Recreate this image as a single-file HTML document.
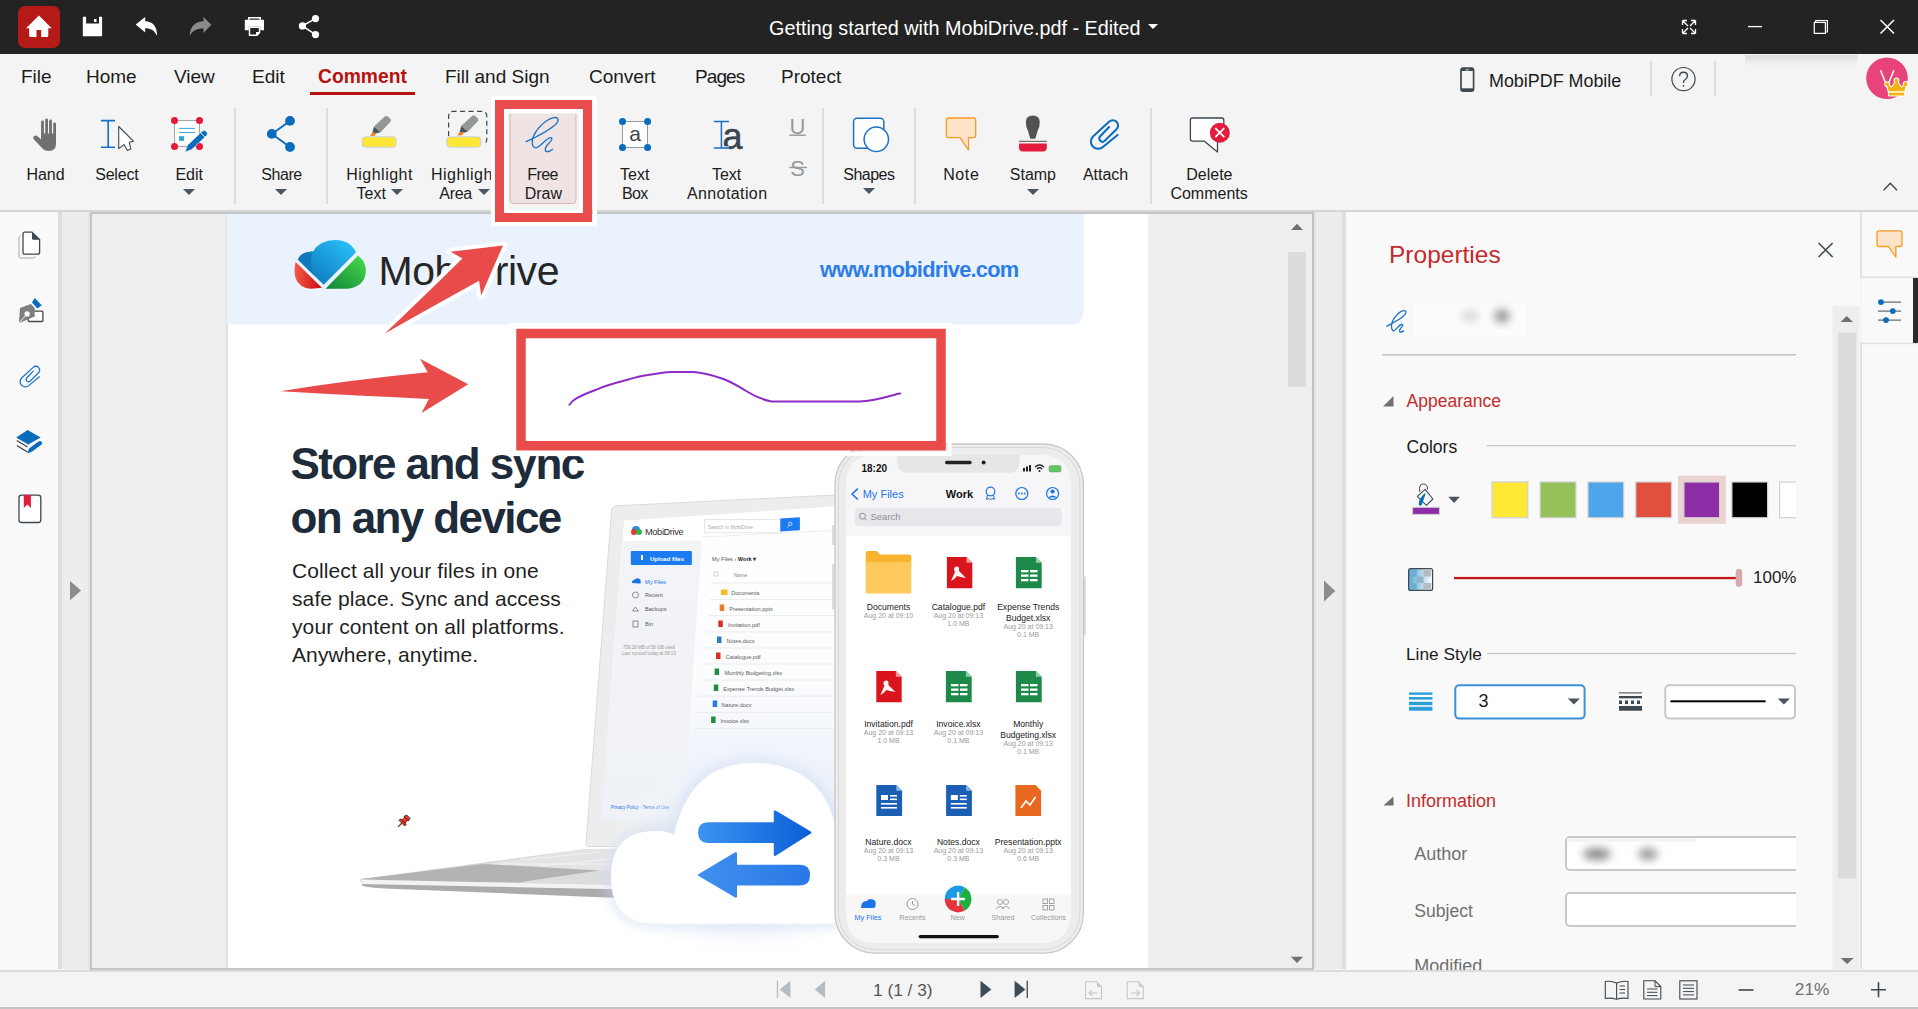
<!DOCTYPE html>
<html><head><meta charset="utf-8">
<style>
*{margin:0;padding:0;box-sizing:border-box}
html,body{width:1918px;height:1009px;overflow:hidden;background:#f4f4f4;font-family:"Liberation Sans",sans-serif;color:#1a1a1a}
.a{position:absolute}
svg{position:absolute;overflow:visible}
#title{left:0;top:0;width:1918px;height:54px;background:#232323}
#menu{left:0;top:54px;width:1918px;height:157px;background:#f4f4f4}
.mi{position:absolute;top:66px;font-size:19px;line-height:22px;color:#1b1b1b;white-space:nowrap}
.rl{position:absolute;font-size:16px;line-height:19px;color:#1b1b1b;text-align:center;white-space:nowrap}
.sep{position:absolute;top:108px;width:2px;height:96px;background:#dedede}
.tri{position:absolute;width:0;height:0;border-left:6px solid transparent;border-right:6px solid transparent;border-top:6px solid #4a5560}
</style></head><body>
<!-- TITLE BAR -->
<div id="title" class="a"></div>
<div class="a" style="left:18px;top:6px;width:42px;height:42px;border-radius:7px;background:#b51a16"></div>
<svg width="1918" height="54" style="left:0;top:0">
<path d="M38.9,15.6 L26,28.2 L29.2,28.2 L29.2,35.5 Q29.2,37 30.7,37 L36.5,37 L36.5,30 L41.2,30 L41.2,37 L46.8,37 Q48.3,37 48.3,35.5 L48.3,28.2 L51.8,28.2 Z" fill="#fff"/>
<path d="M83.5,16.7 L101.4,16.7 Q102.1,16.7 102.1,17.4 L102.1,35.5 Q102.1,36.2 101.4,36.2 L83.5,36.2 Q82.8,36.2 82.8,35.5 L82.8,17.4 Q82.8,16.7 83.5,16.7 Z M86.1,16.7 L86.1,23.4 L99,23.4 L99,16.7 Z" fill="#fff" fill-rule="evenodd"/>
<rect x="94" y="19" width="2.5" height="3" fill="#fff"/>
<path d="M135.7,24.6 L145.2,16.9 L145.2,21.3 C152,21.3 157.5,26 157,36 C154.5,30.5 151,28.3 145.2,28.3 L145.2,32.5 Z" fill="#fff"/>
<path d="M211.3,24.8 L203.5,17 L203.5,21.3 C196.5,21.5 189.5,26 189.8,36 C192.5,30.5 196.5,28.5 203.5,28.5 L203.5,33 Z" fill="#8a8a8a"/>
<path d="M248,17 L261,17 L261,19.7 L259.3,19.7 L259.3,18.4 L249.7,18.4 L249.7,19.7 L248,19.7 Z" fill="#fff"/>
<path d="M245.5,19.7 L263.3,19.7 Q264,19.7 264,20.4 L264,30.3 L260.2,30.3 L260.2,26.8 L248.8,26.8 L248.8,30.3 L244.8,30.3 L244.8,20.4 Q244.8,19.7 245.5,19.7 Z" fill="#fff"/>
<path d="M248.8,26.8 L260.2,26.8 L260.2,33 L257.2,36 L248.8,36 Z M250.2,28 L250.2,34.6 L256,34.6 L256,32 L258.8,32 L258.8,28 Z" fill="#fff" fill-rule="evenodd"/>
<g fill="#fff"><circle cx="315.5" cy="18.6" r="3.6"/><circle cx="302.4" cy="25.9" r="3.6"/><circle cx="315.5" cy="34.6" r="3.6"/></g>
<path d="M315.5,18.6 L302.4,25.9 L315.5,34.6" fill="none" stroke="#fff" stroke-width="1.6"/>
<path d="M1682.5,20.5 L1687,20.5 M1682.5,20.5 L1682.5,25 M1682.5,20.5 L1688,26 M1695.5,20.5 L1691,20.5 M1695.5,20.5 L1695.5,25 M1695.5,20.5 L1690,26 M1682.5,33.5 L1687,33.5 M1682.5,33.5 L1682.5,29 M1682.5,33.5 L1688,28 M1695.5,33.5 L1691,33.5 M1695.5,33.5 L1695.5,29 M1695.5,33.5 L1690,28" stroke="#fff" stroke-width="1.3" fill="none"/>
<path d="M1748,26.6 L1762,26.6" stroke="#fff" stroke-width="1.3"/>
<path d="M1814.3,22.3 L1825.4,22.3 L1825.4,33.4 L1814.3,33.4 Z M1815.8,22.3 L1815.8,20.5 L1827.4,20.5 L1827.4,32 L1825.4,32" stroke="#fff" stroke-width="1.2" fill="none"/>
<path d="M1880.5,20 L1894,33.5 M1894,20 L1880.5,33.5" stroke="#fff" stroke-width="1.5"/>
</svg>
<div class="a" style="left:769px;top:15px;font-size:19.8px;line-height:26px;color:#fff;white-space:nowrap">Getting started with MobiDrive.pdf - Edited</div>
<div class="tri" style="left:1148px;top:24px;border-left-width:5.5px;border-right-width:5.5px;border-top:5.5px solid #fff"></div>

<!-- MENU -->
<div id="menu" class="a"></div>
<div class="mi" style="left:21px">File</div>
<div class="mi" style="left:86px">Home</div>
<div class="mi" style="left:174px">View</div>
<div class="mi" style="left:252px">Edit</div>
<div class="mi" style="left:318px;font-weight:bold;color:#b8120f;font-size:19.3px">Comment</div>
<div class="a" style="left:310px;top:92px;width:105px;height:3px;background:#b8120f"></div>
<div class="mi" style="left:445px">Fill and Sign</div>
<div class="mi" style="left:589px">Convert</div>
<div class="mi" style="left:695px;letter-spacing:-0.9px">Pages</div>
<div class="mi" style="left:781px">Protect</div>
<svg width="1918" height="110" style="left:0;top:0">
<rect x="1461" y="68.2" width="12.6" height="23" rx="2.2" fill="none" stroke="#3d4850" stroke-width="1.7"/>
<path d="M1461.5,68.5 L1473,68.5 L1473,71 L1461.5,71 Z" fill="#3d4850"/>
<path d="M1465.5,69.8 L1469,69.8" stroke="#fff" stroke-width="0.8"/>
<path d="M1461.5,88.3 L1473,88.3 L1473,91 L1461.5,91 Z" fill="#3d4850"/>
<circle cx="1683.5" cy="79.1" r="11.6" fill="none" stroke="#3d4850" stroke-width="1.2"/>
<path d="M1679.6,76.3 Q1679.6,72.3 1683.5,72.3 Q1687.4,72.3 1687.4,76 Q1687.4,78.3 1685.2,79.5 Q1683.5,80.5 1683.5,82.5 L1683.5,83" fill="none" stroke="#3d4850" stroke-width="1.4"/><circle cx="1683.5" cy="85.8" r="0.9" fill="#3d4850"/>
<defs><linearGradient id="sh" x1="0" y1="0" x2="0" y2="1"><stop offset="0" stop-color="#dcdcdc"/><stop offset="1" stop-color="#f4f4f4"/></linearGradient></defs>
<rect x="1745" y="55" width="112.5" height="11" fill="url(#sh)"/>
<circle cx="1887" cy="78.3" r="20.8" fill="#e8437a"/>
<path d="M1880.5,70.3 L1887.2,86.8 L1893.9,70.3" fill="none" stroke="#fff" stroke-width="1.5"/>
<g stroke="#fff" stroke-width="2.2" fill="#f2b313" stroke-linejoin="round">
<path d="M1888.6,91.3 L1886.9,84.3 L1891.8,87.6 L1896.5,80.6 L1901.2,87.6 L1906,84.3 L1904.4,91.3 Z"/>
<circle cx="1887.2" cy="84.2" r="1.9"/><circle cx="1896.5" cy="80.4" r="1.9"/><circle cx="1905.7" cy="83.9" r="1.9"/>
<rect x="1889" y="92.6" width="15.2" height="2.9"/>
</g>
<g fill="#f2b313">
<path d="M1888.6,91.3 L1886.9,84.3 L1891.8,87.6 L1896.5,80.6 L1901.2,87.6 L1906,84.3 L1904.4,91.3 Z"/>
<circle cx="1887.2" cy="84.2" r="1.9"/><circle cx="1896.5" cy="80.4" r="1.9"/><circle cx="1905.7" cy="83.9" r="1.9"/>
<rect x="1889" y="92.6" width="15.2" height="2.9"/>
</g>
</svg>
<div class="mi" style="left:1489px;top:70px;font-size:17.9px">MobiPDF Mobile</div>
<div class="a" style="left:1650px;top:61px;width:2px;height:35px;background:#dcdcdc"></div>
<div class="a" style="left:1714px;top:61px;width:2px;height:35px;background:#dcdcdc"></div>

<!-- RIBBON bottom border -->
<div class="a" style="left:0;top:210px;width:1918px;height:2px;background:#d6d6d6"></div>

<svg width="1918" height="220" style="left:0;top:0">
<g fill="#6f7171">
<rect x="41.1" y="120.4" width="2.8" height="20" rx="1.4"/>
<rect x="45.2" y="118.6" width="2.8" height="20" rx="1.4"/>
<rect x="49.1" y="119.5" width="2.8" height="20" rx="1.4"/>
<rect x="53.2" y="122.4" width="2.8" height="20" rx="1.4"/>
<path d="M41.1,133.5 L56,133.5 L56,144 Q56,151 49,151 Q44.5,151 42,148 L34,139.5 Q32.3,137.5 34.3,136 Q36,135 37.8,136.5 L41.1,139.5 Z"/>
</g>
<path d="M101,120.6 L115,120.6 M108.2,120.6 L108.2,147.3 M101,147.3 L115,147.3" stroke="#1470c4" stroke-width="1.6" fill="none"/>
<path d="M118.7,126.5 L133.4,141.2 L129.3,142.3 L130.8,149 L127.3,150.4 L124,144.6 L118.7,148.6 Z" fill="#fff" stroke="#3c4850" stroke-width="1.1" stroke-linejoin="round"/>
<rect x="174.5" y="120.6" width="25" height="25.9" fill="#fff" stroke="#9a9a9a" stroke-width="0.9"/>
<g fill="#e3193b"><circle cx="174.5" cy="120.4" r="3.5"/><circle cx="199.5" cy="120.4" r="3.5"/><circle cx="174.5" cy="146.5" r="3.5"/><circle cx="199.5" cy="146.5" r="3.5"/></g>
<path d="M179.1,128.4 L194.9,128.4 M179.1,132.5 L194.9,132.5" stroke="#1ea0dc" stroke-width="0.9"/>
<rect x="179.1" y="136.2" width="4.9" height="4.6" fill="#2ba3dc"/>
<path d="M185.1,152 L187.5,145.2 L202.5,131 Q204.5,129.8 206.5,131.5 Q208.2,133.5 206.8,135.3 L191.8,149.5 Z" fill="#0a6cbd" stroke="#f4f4f4" stroke-width="0.6"/>
<path d="M200.7,132.8 L205,137.2" stroke="#f4f4f4" stroke-width="1"/>
<g fill="#0a6cbd"><circle cx="290" cy="120.9" r="4.9"/><circle cx="271.8" cy="133.9" r="4.9"/><circle cx="290" cy="147" r="4.9"/></g>
<path d="M290,120.9 L271.8,133.9 L290,147" stroke="#0a6cbd" stroke-width="1.9" fill="none"/>
<g id="hl">
<rect x="362.2" y="136.9" width="33.8" height="10.2" rx="3" fill="#fde835" stroke="#cdcdcd" stroke-width="1"/>
<path d="M385,116.3 Q386.5,115.5 388,116.5 L390.6,119.2 Q391.5,120.5 390.5,121.8 L380.5,132.3 L374,126.4 Z" fill="#949799"/>
<path d="M374,126.4 L380.5,132.3 L376.5,133.3 L372.4,132.6 Z" fill="#47535d"/>
<path d="M372.4,132.4 L376.4,133.3 L374.6,135.8 L370.1,136 Z" fill="#f27d1c"/>
</g>
<g transform="translate(84.7,0)"><rect x="362.2" y="136.9" width="33.8" height="10.2" rx="3" fill="#fde835" stroke="#cdcdcd" stroke-width="1"/></g>
<g transform="translate(87.3,-0.6)">
<path d="M385,116.3 Q386.5,115.5 388,116.5 L390.6,119.2 Q391.5,120.5 390.5,121.8 L380.5,132.3 L374,126.4 Z" fill="#949799"/>
<path d="M374,126.4 L380.5,132.3 L376.5,133.3 L372.4,132.6 Z" fill="#47535d"/>
<path d="M372.4,132.4 L376.4,133.3 L374.6,135.8 L370.1,136 Z" fill="#f27d1c"/>
</g>
<path d="M448.6,136 L448.6,116.5 Q448.6,111.3 453.8,111.3 L481.6,111.3 Q486.8,111.3 486.8,116.5 L486.8,139 Q486.8,143.5 483,144" fill="none" stroke="#3d4850" stroke-width="1.2" stroke-dasharray="5,3.5"/>
<!-- free draw button -->
<path d="M510,113.7 L510,200 Q510,203.5 513.5,203.5 L572.5,203.5 Q576,203.5 576,200 L576,113.7 Z" fill="#efe3e3"/><path d="M510,113.7 L510,200 Q510,203.5 513.5,203.5 L572.5,203.5 Q576,203.5 576,200 L576,113.7" fill="none" stroke="#d9b3b3" stroke-width="1"/>
<path d="M525.6,141.8 C533,138.5 548,131 555,125 C560,120.5 558.5,117 554,117.6 C547,118.5 537,128 533.5,136 C531,142 532,148 536,147.8 C540,147.5 545,139.5 549.5,137.8 C553,137 552.5,140 549,143 C545,147 544,151 547,151.7 C549,152 551,150.5 552.9,149" fill="none" stroke="#1a73c5" stroke-width="1.3"/>
<!-- text box -->
<rect x="622.5" y="121.5" width="25.1" height="26" fill="#fff" stroke="#7a8288" stroke-width="0.8"/>
<g fill="#0a6cbd"><circle cx="622.5" cy="121.5" r="3.5"/><circle cx="647.6" cy="121.5" r="3.5"/><circle cx="622.5" cy="147.5" r="3.5"/><circle cx="647.6" cy="147.5" r="3.5"/></g>
<text x="635.1" y="140.5" font-family="Liberation Sans" font-size="21" fill="#3a4550" text-anchor="middle">a</text>
<!-- text annotation -->
<text x="732.4" y="148.6" font-family="Liberation Sans" font-size="36" fill="#3a4550" stroke="#3a4550" stroke-width="0.5" text-anchor="middle">a</text>
<path d="M713.8,121.6 L729,121.6 M721.4,121.6 L721.4,148 M713.8,148 L729,148" stroke="#f4f4f4" stroke-width="3.5" fill="none" opacity="0.9"/>
<path d="M713.8,121.6 L729,121.6 M721.4,121.6 L721.4,148 M713.8,148 L729,148" stroke="#1470c4" stroke-width="1.5" fill="none"/>
<!-- U S -->
<text x="797.5" y="134" font-family="Liberation Sans" font-size="22" fill="#959a9e" text-anchor="middle">U</text>
<path d="M789.3,135.2 L805.8,135.2" stroke="#959a9e" stroke-width="1.5"/>
<text x="797.5" y="175.5" font-family="Liberation Sans" font-size="22" fill="#959a9e" text-anchor="middle">S</text>
<path d="M789.3,167.5 L807,167.5" stroke="#959a9e" stroke-width="1.4"/>
<!-- shapes -->
<rect x="853.6" y="118.2" width="30.2" height="30" rx="3.5" fill="#fff" stroke="#1a73c5" stroke-width="1.5"/>
<circle cx="876.3" cy="139.3" r="12.2" fill="#fff" stroke="#1a73c5" stroke-width="1.5"/>
<!-- note -->
<path d="M948.3,118 L973.7,118 Q975.7,118 975.7,120 L975.7,135.6 Q975.7,137.6 973.7,137.6 L968.5,137.6 L968.5,150 L960,137.6 L948.3,137.6 Q946.3,137.6 946.3,135.6 L946.3,120 Q946.3,118 948.3,118 Z" fill="#fde3c8" stroke="#f59a23" stroke-width="1.3" stroke-linejoin="round"/>
<!-- stamp -->
<path d="M1030.3,138.7 L1028,131 Q1025.8,126.5 1025.8,122.3 Q1025.8,115.5 1032.8,115.5 Q1039.8,115.5 1039.8,122.3 Q1039.8,126.5 1037.6,131 L1035.3,138.7 Z" fill="#525252"/>
<path d="M1019,141.3 L1046.8,141.3" stroke="#3a3a3a" stroke-width="0.9"/>
<path d="M1019,143.6 L1046.8,143.6 L1046.8,147.5 Q1046.8,151.6 1042.7,151.6 L1023.1,151.6 Q1019,151.6 1019,147.5 Z" fill="#e31b3f"/>
<!-- attach -->
<path id="clip" d="M1109.1,127 L1100,136.5 A3.2,3.2 0 0,0 1104.5,141 L1116.5,129.2 A5.3,5.3 0 0,0 1109,121.7 L1093,136.5 A7.2,7.2 0 0,0 1103.2,146.7 L1117.6,134.9" fill="none" stroke="#0a6cbd" stroke-width="2" stroke-linecap="round"/>
<!-- delete -->
<path d="M1192.4,118 L1221.8,118 Q1223.8,118 1223.8,120 L1223.8,139.1 Q1223.8,141.1 1221.8,141.1 L1217.5,141.1 L1217.5,152 L1204.1,141.1 L1192.4,141.1 Q1190.4,141.1 1190.4,139.1 L1190.4,120 Q1190.4,118 1192.4,118 Z" fill="#fff" stroke="#3a4550" stroke-width="1.3" stroke-linejoin="round"/>
<circle cx="1219.8" cy="132.7" r="10" fill="#e31b3f"/>
<path d="M1215.3,128.2 L1224.3,137.2 M1224.3,128.2 L1215.3,137.2" stroke="#fff" stroke-width="1.8"/>
<!-- collapse chevron -->
<path d="M1883.6,190.2 L1890.3,183.3 L1897,190.2" fill="none" stroke="#3d4850" stroke-width="1.4"/>
</svg>
<!-- RIBBON -->
<div class="sep" style="left:234px"></div>
<div class="sep" style="left:326px"></div>
<div class="sep" style="left:822px"></div>
<div class="sep" style="left:914px"></div>
<div class="sep" style="left:1150px"></div>
<div class="rl" style="left:-54.5px;top:165px;width:200px;">Hand</div>
<div class="rl" style="left:16.799999999999997px;top:165px;width:200px;letter-spacing:-0.2px">Select</div>
<div class="rl" style="left:89.19999999999999px;top:165px;width:200px;">Edit</div>
<div class="rl" style="left:181.5px;top:165px;width:200px;letter-spacing:-0.4px">Share</div>
<div class="rl" style="left:279.6px;top:165px;width:200px;letter-spacing:0.5px">Highlight</div>
<div class="rl" style="left:356.5px;top:184px">Text</div>
<div class="rl" style="left:431px;top:165px;letter-spacing:0.5px">Highlight</div>
<div class="rl" style="left:439.3px;top:184px;letter-spacing:-0.3px">Area</div>
<div class="rl" style="left:442.6px;top:165px;width:200px;letter-spacing:-0.6px">Free</div>
<div class="rl" style="left:443.4px;top:184px;width:200px;">Draw</div>
<div class="rl" style="left:534.7px;top:165px;width:200px;">Text</div>
<div class="rl" style="left:534.9px;top:184px;width:200px;letter-spacing:-0.6px">Box</div>
<div class="rl" style="left:626.6px;top:165px;width:200px;">Text</div>
<div class="rl" style="left:627.2px;top:184px;width:200px;letter-spacing:0.4px">Annotation</div>
<div class="rl" style="left:768.9px;top:165px;width:200px;letter-spacing:-0.5px">Shapes</div>
<div class="rl" style="left:861.3px;top:165px;width:200px;letter-spacing:0.6px">Note</div>
<div class="rl" style="left:932.9000000000001px;top:165px;width:200px;">Stamp</div>
<div class="rl" style="left:1005.5999999999999px;top:165px;width:200px;">Attach</div>
<div class="rl" style="left:1109.4px;top:165px;width:200px;">Delete</div>
<div class="rl" style="left:1109.1px;top:184px;width:200px;">Comments</div>
<div class="tri" style="left:183px;top:189px"></div>
<div class="tri" style="left:275px;top:189px"></div>
<div class="tri" style="left:391.2px;top:189px"></div>
<div class="tri" style="left:478px;top:189px"></div>
<div class="tri" style="left:863px;top:188px"></div>
<div class="tri" style="left:1027px;top:189px"></div>
<!-- MAIN -->
<div class="a" style="left:0;top:212px;width:58px;height:757px;background:#f9f9f9"></div>
<div class="a" style="left:58px;top:212px;width:4px;height:757px;background:#dedede"></div>
<div class="a" style="left:62px;top:212px;width:26px;height:757px;background:#ededf0"></div>
<div class="a" style="left:88px;top:212px;width:2px;height:757px;background:#e4e4e4"></div>
<div class="a" style="left:90px;top:212px;width:1224px;height:758px;background:#eeeeee;border:2px solid #c4c4c4"></div>
<div class="a" style="left:226px;top:214px;width:1.6px;height:754px;background:#e2e2e2"></div>
<div class="a" style="left:227.5px;top:214px;width:920.5px;height:754px;background:#fff"></div>

<div class="a" style="left:1314px;top:212px;width:1.8px;height:757px;background:#e4e4e4"></div><div class="a" style="left:1315.8px;top:212px;width:26.2px;height:757px;background:#ededf0"></div>
<div class="a" style="left:1342px;top:212px;width:4px;height:757px;background:#dedede"></div>
<div class="a" style="left:1346px;top:212px;width:514px;height:757px;background:#f9f9f9"></div>
<div class="a" style="left:1860px;top:212px;width:2px;height:65px;background:#e1e1e1"></div><div class="a" style="left:1860px;top:343px;width:2px;height:626px;background:#e1e1e1"></div>
<div class="a" style="left:1862px;top:212px;width:56px;height:757px;background:#f9f9f9"></div>

<!-- PAGE CONTENT -->
<svg width="1918" height="1009" style="left:0;top:0">
<defs>
<clipPath id="pg"><rect x="227" y="214" width="921" height="755"/></clipPath>
<linearGradient id="gb" x1="1" y1="0" x2="0" y2="1"><stop offset="0" stop-color="#2ac5fc"/><stop offset="1" stop-color="#0a6db3"/></linearGradient>
<linearGradient id="gr" x1="0" y1="0" x2="1" y2="0"><stop offset="0" stop-color="#f65a48"/><stop offset="1" stop-color="#c70b0b"/></linearGradient>
<linearGradient id="gg" x1="0" y1="1" x2="1" y2="0"><stop offset="0" stop-color="#0f8438"/><stop offset="1" stop-color="#48dc4c"/></linearGradient>
<linearGradient id="ga" x1="0" y1="0" x2="1" y2="0"><stop offset="0" stop-color="#3d92f2"/><stop offset="1" stop-color="#0c5fd6"/></linearGradient>
<linearGradient id="ga2" x1="0" y1="0" x2="1" y2="0"><stop offset="0" stop-color="#3f90f0"/><stop offset="1" stop-color="#2a78e6"/></linearGradient>
<radialGradient id="glow" cx="0.5" cy="0.55" r="0.5"><stop offset="0.6" stop-color="#dfe9f8"/><stop offset="1" stop-color="#ffffff" stop-opacity="0"/></radialGradient>
<linearGradient id="scr" x1="0" y1="0" x2="0" y2="1"><stop offset="0" stop-color="#ffffff"/><stop offset="1" stop-color="#eef2f8"/></linearGradient>
</defs>
<g clip-path="url(#pg)">
<path d="M227,214 L1083.6,214 L1083.6,311 Q1083.6,324.6 1070,324.6 L227,324.6 Z" fill="#eaf2fd"/>
<!-- logo -->
<path d="M297.8,259.5 Q300,253 310,251.8 L313,251.6 Q320,240 335,240 Q350,240 356,252.3 L323.7,284.8 Z" fill="url(#gb)"/>
<path d="M297.8,259.5 Q300,253 310,251.8 L313,251.6 Q310.5,258 311,265 Q311.5,272 316,277.5 Z" fill="#0e76b6" opacity="0.8"/>
<path d="M295.7,262 L321.9,287.8 L311,288.8 Q299,288 295.5,278 Q293.5,270 295.7,262 Z" fill="url(#gr)"/>
<path d="M357.9,255.7 Q366.3,261 365.8,272 Q364.5,287 347,288.8 L325.5,288.8 Z" fill="url(#gg)"/>
<!-- laptop -->
<defs><linearGradient id="lc" x1="0" y1="0" x2="0" y2="1"><stop offset="0" stop-color="#ffffff"/><stop offset="0.55" stop-color="#fbfcfe"/><stop offset="1" stop-color="#e6edf8"/></linearGradient>
<linearGradient id="sb" x1="0" y1="0" x2="0" y2="1"><stop offset="0" stop-color="#f3f4f7"/><stop offset="1" stop-color="#eef1f6"/></linearGradient></defs>
<path d="M617,505.8 Q612,506 611.5,511 L586,844 Q586,846.5 589,846.5 L835,846.5 L835,495 Z" fill="#ededed" stroke="#dadada" stroke-width="1"/>
<path d="M624.2,520.8 L835,506.6 L835,820.5 L600.5,820.5 Z" fill="url(#lc)"/>
<path d="M624.2,520.8 L835,506.6 L835,530.5 L623.4,541 Z" fill="#ffffff"/><path d="M701.8,537 L835,530.5" stroke="#e8e8e8" stroke-width="0.8"/>
<path d="M623.4,541 L701.8,540.5 L683,820.5 L600.5,820.5 Z" fill="url(#sb)"/>
<rect x="630.8" y="551" width="61.1" height="14" rx="1" fill="#1a7cf0"/>
<rect x="704.4" y="519.5" width="76.3" height="13.3" fill="#fff" stroke="#e0e0e0" stroke-width="0.8"/>
<path d="M780.3,518.6 L799.9,517.3 L799.9,530.2 L780.3,531.5 Z" fill="#1a7cf0"/><path d="M789,525.5 L787.5,527.5" stroke="#fff" stroke-width="0.7"/><circle cx="790.3" cy="523.8" r="1.7" fill="none" stroke="#fff" stroke-width="0.7"/>
<circle cx="636" cy="530" r="4" fill="#1f8ee0"/><circle cx="634" cy="532" r="3" fill="#e23b2e"/><circle cx="639" cy="532" r="3" fill="#2eb84d"/>
<text x="645" y="534.5" font-family="Liberation Sans" font-size="9.3" fill="#333" letter-spacing="-0.4">MobiDrive</text>
<g font-family="Liberation Sans" font-size="5.6" fill="#5a5a5a">
<path d="M632,583 Q632,579.5 635,579.5 Q636.5,577.5 638.5,578.5 Q641,579 640.5,581.5 Q641.5,583.5 639.5,583.5 Z" fill="#1a73e8"/>
<text x="645" y="584" fill="#1a73e8">My Files</text>
<circle cx="635.5" cy="595" r="3" fill="none" stroke="#666" stroke-width="0.7"/><text x="645" y="597">Recent</text>
<path d="M632.5,611 L635.5,607 L638.5,611 Z" fill="none" stroke="#666" stroke-width="0.7"/><text x="645" y="611">Backups</text>
<rect x="633" y="621" width="5" height="6" fill="none" stroke="#666" stroke-width="0.7"/><text x="645" y="626">Bin</text>
<text x="623" y="649" font-size="4.5" fill="#999">759.28 MB of 50 GB used</text>
<text x="622" y="655" font-size="4.5" fill="#999">Last synced today at 09:13</text>
<text x="610.7" y="809" font-size="4.5" fill="#1a73e8">Privacy Policy · Terms of Use</text>
<text x="712" y="561" fill="#555">My Files  ›  <tspan font-weight="bold" fill="#222">Work ▾</tspan></text>
<rect x="714" y="572" width="4" height="4" fill="none" stroke="#bbb" stroke-width="0.6"/><text x="734" y="577" fill="#888" font-size="5">Name</text>
<text x="731.2" y="595">Documents</text>
<text x="729.3" y="611">Presentation.pptx</text>
<text x="728" y="627">Invitation.pdf</text>
<text x="726.6" y="643">Notes.docx</text>
<text x="725.8" y="659">Catalogue.pdf</text>
<text x="724.5" y="675">Monthly Budgeting.xlsx</text>
<text x="723.2" y="691">Expense Trends Budget.xlsx</text>
<text x="721.3" y="707">Nature.docx</text>
<text x="720.5" y="723">Invoice.xlsx</text>
</g>
<text x="708" y="529" font-family="Liberation Sans" font-size="5" fill="#aaa">Search in MobiDrive</text>
<g fill="#fff"><rect x="641" y="555" width="2" height="5"/><text x="650" y="561" font-family="Liberation Sans" font-size="6" font-weight="bold">Upload files</text></g>
<g stroke="#e6e8eb" stroke-width="0.8"><path d="M712,583 L835,583 M710,599.5 L835,599.5 M708,615.6 L835,615.6 M706,631.8 L835,631.8 M704,648 L835,648 M702,664 L835,664 M700,680 L835,680 M698,696.2 L835,696.2 M696,712.4 L835,712.4 M694,728.5 L835,728.5"/></g>
<g><rect x="721" y="589.5" width="6.5" height="5.5" fill="#f7b82a"/><rect x="719.7" y="604.5" width="4.5" height="6.5" fill="#ee7b25"/><rect x="718.3" y="620.5" width="4.5" height="6.5" fill="#d93025"/><rect x="717" y="636.5" width="4.5" height="6.5" fill="#2a7bd6"/><rect x="716" y="652.5" width="4.5" height="6.5" fill="#d93025"/><rect x="714.6" y="668.5" width="4.5" height="6.5" fill="#1e8e3e"/><rect x="713.8" y="684.5" width="4.5" height="6.5" fill="#1e8e3e"/><rect x="712.7" y="700.5" width="4.5" height="6.5" fill="#2a7bd6"/><rect x="711.1" y="716.5" width="4.5" height="6.5" fill="#1e8e3e"/></g>
<!-- laptop base -->
<path d="M360.8,878.9 L585.7,849 L700,848.5 L700,886 L360.8,882 Z" fill="#d6d6d6"/>
<path d="M483.5,864 L585.7,849 L700,848.5 L700,872 L590,871 Z" fill="#e4e4e4"/>
<path d="M520,860 L600,852 M540,866 L620,858 M500,864 L610,864" stroke="#f2f2f2" stroke-width="1"/>
<path d="M360.8,878.9 L483.5,864 L600,870.5 L518.5,882.6 L360.8,882 Z" fill="#b3b3b3"/>
<path d="M518.5,882.6 L600,870.5 L700,870.5 L700,887 Z" fill="#dcdcdc"/>
<path d="M361,879.5 L700,887 L700,891 L362,884 Z" fill="#f3f3f3"/>
<path d="M362,884 L700,891 L700,898 L619,897.9 L385,888.5 Q366,887.5 362,885.5 Z" fill="#ababab"/>
<!-- cloud glow + cloud -->
<ellipse cx="745" cy="850" rx="140" ry="105" fill="url(#glow)" opacity="0.55"/>
<defs><filter id="cg" x="-20%" y="-20%" width="140%" height="140%"><feGaussianBlur stdDeviation="6"/></filter></defs>
<path d="M656,923.8 Q611,923.8 611,877 Q611,831 656,831 Q668,831 674,835 Q690,763 752.8,763 Q820,763 835,825 L835,923.8 Z" fill="none" stroke="#cfdcf3" stroke-width="6" filter="url(#cg)" opacity="0.9"/>
<path d="M656,923.8 Q611,923.8 611,877 Q611,831 656,831 Q668,831 674,835 Q690,763 752.8,763 Q820,763 835,825 L835,923.8 Z" fill="#ffffff"/>
<path d="M699.3,832.5 Q699.3,823.4 708,823.4 L775,823.4 L775,811.7 L810.1,832.5 L775,854.7 L775,841.7 L708,841.7 Q699.3,841.7 699.3,832.5 Z" fill="url(#ga)" stroke="url(#ga)" stroke-width="2.5" stroke-linejoin="round"/>
<path d="M808.8,875 Q808.8,865.9 800,865.9 L735.8,865.9 L735.8,853.4 L699.3,875 L735.8,896.4 L735.8,884.2 L800,884.2 Q808.8,884.2 808.8,875 Z" fill="url(#ga2)" stroke="url(#ga2)" stroke-width="2.5" stroke-linejoin="round"/>
<!-- pin -->
<g transform="translate(403.4,821.6) rotate(45)">
<path d="M0,2 L0,7.5" stroke="#8a2a20" stroke-width="1.3"/>
<path d="M-2.4,-7 L2.4,-7 L3.2,-4 L-3.2,-4 Z" fill="#f03a2e" stroke="#1a0a0a" stroke-width="0.7"/>
<rect x="-2.2" y="-4" width="4.4" height="4" fill="#f03a2e" stroke="#1a0a0a" stroke-width="0.6"/>
<rect x="-4" y="0" width="8" height="2.2" fill="#f03a2e" stroke="#1a0a0a" stroke-width="0.7"/>
</g>
</g>
</svg>
<!-- PHONE -->
<svg width="1918" height="1009" style="left:0;top:0">
<g clip-path="url(#pg)">
<rect x="832" y="525" width="4" height="20" rx="1" fill="#dcdcdc"/>
<rect x="832" y="563.6" width="4" height="46" rx="1" fill="#dcdcdc"/>
<rect x="1082" y="576.5" width="4" height="59" rx="1" fill="#dcdcdc"/>
<rect x="835" y="444" width="248.4" height="509.2" rx="40" fill="#ececec" stroke="#c9c9c9" stroke-width="1.3"/>
<rect x="838.5" y="447.5" width="241.4" height="502.2" rx="37" fill="none" stroke="#d8d8d8" stroke-width="1"/>
<rect x="845.9" y="454.9" width="224.9" height="487.8" rx="30" fill="#fff"/>
<path d="M845.9,894 L1070.8,894 L1070.8,912.7 Q1070.8,942.7 1040.8,942.7 L875.9,942.7 Q845.9,942.7 845.9,912.7 Z" fill="#f7f7f8"/>
<path d="M845.9,536.1 L845.9,484.9 Q845.9,454.9 875.9,454.9 L1040.8,454.9 Q1070.8,454.9 1070.8,484.9 L1070.8,536.1 Z" fill="#f6f6f8"/>
<path d="M897.4,454.9 L897.4,462 Q897.4,472.7 908,472.7 L1008.7,472.7 Q1019.3,472.7 1019.3,462 L1019.3,454.9 Z" fill="#e6e6e6"/>
<rect x="945" y="460.7" width="26.7" height="3.6" rx="1.8" fill="#222"/>
<circle cx="983.6" cy="462.6" r="2" fill="#222"/>
<text x="861.5" y="471.8" font-family="Liberation Sans" font-size="10" font-weight="bold" fill="#111">18:20</text>
<g fill="#222"><rect x="1023" y="468" width="2" height="3.5"/><rect x="1026" y="466.5" width="2" height="5"/><rect x="1029" y="465" width="2" height="6.5"/></g>
<path d="M1035,467 Q1039.5,463 1044,467 M1036.8,469 Q1039.5,466.5 1042.2,469" fill="none" stroke="#222" stroke-width="1.2"/>
<circle cx="1039.5" cy="471" r="1" fill="#222"/>
<rect x="1049" y="465.5" width="12" height="6.5" rx="1.5" fill="#5ac85a" stroke="#999" stroke-width="0.6"/>
<path d="M850.8,488.6 L856.5,494 L850.8,499.5" transform="translate(7,0) scale(-1,1) translate(-1701.6,0)" fill="none" stroke="#1a73e8" stroke-width="1.6"/>
<text x="862.7" y="497.5" font-family="Liberation Sans" font-size="11" fill="#1a73e8">My Files</text>
<text x="945.8" y="497.5" font-family="Liberation Sans" font-size="11" font-weight="bold" fill="#111">Work</text>
<circle cx="990.5" cy="491.5" r="4.3" fill="none" stroke="#1a73e8" stroke-width="1.2"/>
<path d="M987.5,495 L986.5,499.5 L989,498.3 L990.5,500 M993.5,495 L994.5,499.5 L992,498.3 L990.5,500" fill="none" stroke="#1a73e8" stroke-width="1"/>
<circle cx="1021.8" cy="493.5" r="6" fill="none" stroke="#1a73e8" stroke-width="1.2"/>
<g fill="#1a73e8"><circle cx="1019" cy="493.5" r="0.9"/><circle cx="1021.8" cy="493.5" r="0.9"/><circle cx="1024.6" cy="493.5" r="0.9"/></g>
<circle cx="1052.6" cy="493.5" r="6" fill="none" stroke="#1a73e8" stroke-width="1.2"/>
<circle cx="1052.6" cy="491.5" r="2.1" fill="#1a73e8"/>
<path d="M1048.3,497.5 Q1052.6,493.5 1056.9,497.5" fill="#1a73e8"/>
<rect x="854.8" y="508" width="207.1" height="18.2" rx="4.5" fill="#e8e8ec"/>
<circle cx="862.5" cy="516.2" r="3" fill="none" stroke="#8e8e93" stroke-width="1"/>
<path d="M864.7,518.4 L866.6,520.3" stroke="#8e8e93" stroke-width="1"/>
<text x="870.5" y="520" font-family="Liberation Sans" font-size="9.5" fill="#8e8e93">Search</text>
<!-- row 1 -->
<path d="M865.7,553 Q865.7,551 867.7,551 L877,551 L880,554.5 L909.3,554.5 Q911.3,554.5 911.3,556.5 L911.3,566 L865.7,566 Z" fill="#f8b431"/>
<rect x="865.7" y="561.9" width="45.6" height="31.7" rx="1.5" fill="#fdc95d"/>
<g id="pdf"><path d="M946.9,556.9 L966.5,556.9 L972.3,562.7 L972.3,588.2 L946.9,588.2 Z" fill="#d9141c"/>
<path d="M966.5,556.9 L972.3,562.7 L966.5,562.7 Z" fill="#f39a9a"/>
<path d="M955,567 Q960,565 959,571 Q963,575 966,578 Q960,577 957,576 Q954,580 951,581 Q953,576 955,572 Q953,569 955,567 Z" fill="#fff" opacity="0.95"/></g>
<g id="xls"><path d="M1015.9,556.9 L1035.9,556.9 L1041.7,562.7 L1041.7,588.2 L1015.9,588.2 Z" fill="#1d8a4a"/>
<path d="M1035.9,556.9 L1041.7,562.7 L1035.9,562.7 Z" fill="#8fd0a8"/>
<g fill="#fff"><rect x="1021" y="570" width="7.5" height="2.3"/><rect x="1030" y="570" width="7.5" height="2.3"/><rect x="1021" y="574.5" width="7.5" height="2.3"/><rect x="1030" y="574.5" width="7.5" height="2.3"/><rect x="1021" y="579" width="7.5" height="2.3"/><rect x="1030" y="579" width="7.5" height="2.3"/></g></g>
<g font-family="Liberation Sans" text-anchor="middle">
<text x="888.5" y="609.5" font-size="8.6" fill="#222">Documents</text>
<text x="888.5" y="617.5" font-size="7" fill="#9a9a9a">Aug 20 at 09:10</text>
<text x="958.4" y="609.5" font-size="8.6" fill="#222">Catalogue.pdf</text>
<text x="958.4" y="617.5" font-size="7" fill="#9a9a9a">Aug 20 at 09:13</text>
<text x="958.4" y="625.5" font-size="7" fill="#9a9a9a">1.0 MB</text>
<text x="1028.2" y="609.5" font-size="8.6" fill="#222">Expense Trends</text>
<text x="1028.2" y="620.5" font-size="8.6" fill="#222">Budget.xlsx</text>
<text x="1028.2" y="628.5" font-size="7" fill="#9a9a9a">Aug 20 at 09:13</text>
<text x="1028.2" y="636.5" font-size="7" fill="#9a9a9a">0.1 MB</text>
<text x="888.5" y="726.5" font-size="8.6" fill="#222">Invitation.pdf</text>
<text x="888.5" y="734.5" font-size="7" fill="#9a9a9a">Aug 20 at 09:13</text>
<text x="888.5" y="742.5" font-size="7" fill="#9a9a9a">1.0 MB</text>
<text x="958.4" y="726.5" font-size="8.6" fill="#222">Invoice.xlsx</text>
<text x="958.4" y="734.5" font-size="7" fill="#9a9a9a">Aug 20 at 09:13</text>
<text x="958.4" y="742.5" font-size="7" fill="#9a9a9a">0.1 MB</text>
<text x="1028.2" y="726.5" font-size="8.6" fill="#222">Monthly</text>
<text x="1028.2" y="737.5" font-size="8.6" fill="#222">Budgeting.xlsx</text>
<text x="1028.2" y="745.5" font-size="7" fill="#9a9a9a">Aug 20 at 09:13</text>
<text x="1028.2" y="753.5" font-size="7" fill="#9a9a9a">0.1 MB</text>
<text x="888.5" y="844.5" font-size="8.6" fill="#222">Nature.docx</text>
<text x="888.5" y="852.5" font-size="7" fill="#9a9a9a">Aug 20 at 09:13</text>
<text x="888.5" y="860.5" font-size="7" fill="#9a9a9a">0.3 MB</text>
<text x="958.4" y="844.5" font-size="8.6" fill="#222">Notes.docx</text>
<text x="958.4" y="852.5" font-size="7" fill="#9a9a9a">Aug 20 at 09:13</text>
<text x="958.4" y="860.5" font-size="7" fill="#9a9a9a">0.3 MB</text>
<text x="1028.2" y="844.5" font-size="8.6" fill="#222">Presentation.pptx</text>
<text x="1028.2" y="852.5" font-size="7" fill="#9a9a9a">Aug 20 at 09:13</text>
<text x="1028.2" y="860.5" font-size="7" fill="#9a9a9a">0.6 MB</text>
</g>
<use href="#pdf" transform="translate(-70.6,114)"/>
<use href="#xls" transform="translate(-70,114)"/>
<use href="#xls" transform="translate(0,114)"/>
<g id="doc"><path d="M876.3,785 L896.3,785 L902.1,790.8 L902.1,816 L876.3,816 Z" fill="#1a5fb4"/>
<path d="M896.3,785 L902.1,790.8 L896.3,790.8 Z" fill="#8cb4e8"/>
<g fill="#fff"><rect x="881" y="795" width="7" height="5"/><rect x="890" y="795" width="7" height="1.6"/><rect x="890" y="798.5" width="7" height="1.6"/><rect x="881" y="803" width="16" height="1.6"/><rect x="881" y="807" width="16" height="1.6"/></g></g>
<use href="#doc" transform="translate(69.8,0)"/>
<path d="M1015.4,785 L1035.4,785 L1041.1,790.8 L1041.1,816 L1015.4,816 Z" fill="#e8681f"/>
<path d="M1021,808 L1026,801 L1030,805 L1035.5,797" fill="none" stroke="#fff" stroke-width="1.6"/>
<!-- tab bar -->

<path d="M861,908 Q861,901 867,901 Q869,898 872.5,899.5 Q876.5,900 875.5,905 Q876,908 873,908 Z" fill="#1a73e8"/>
<circle cx="912.5" cy="904" r="5.5" fill="none" stroke="#9a9a9a" stroke-width="1"/>
<path d="M912.5,901 L912.5,904 L915,905.5" fill="none" stroke="#9a9a9a" stroke-width="1"/>
<path d="M958.1,899 L944.7,899 A13.4,13.4 0 0,1 964.8,887.4 Z" fill="#1b9ae6"/>
<path d="M958.1,899 L964.8,887.4 A13.4,13.4 0 0,1 964.8,910.6 Z" fill="#18b03f"/>
<path d="M958.1,899 L964.8,910.6 A13.4,13.4 0 0,1 944.7,899 Z" fill="#e5343b"/>
<path d="M951.2,899 L965,899 M958.1,892.1 L958.1,905.9" stroke="#fff" stroke-width="2.4"/>
<g fill="none" stroke="#9a9a9a" stroke-width="0.9"><circle cx="1000" cy="902" r="2.5"/><circle cx="1006" cy="902" r="2.5"/><path d="M996,909 Q1000,904 1004,909 M1002,909 Q1006,904 1010,909"/>
<rect x="1043" y="899" width="4.5" height="4.5"/><rect x="1049.5" y="899" width="4.5" height="4.5"/><rect x="1043" y="905.5" width="4.5" height="4.5"/><rect x="1049.5" y="905.5" width="4.5" height="4.5"/></g>
<g font-family="Liberation Sans" text-anchor="middle" font-size="7.2">
<text x="868" y="920" fill="#1a73e8">My Files</text>
<text x="912.5" y="920" fill="#9a9a9a">Recents</text>
<text x="957.7" y="920" fill="#9a9a9a">New</text>
<text x="1003" y="920" fill="#9a9a9a">Shared</text>
<text x="1048.5" y="920" fill="#9a9a9a">Collections</text>
</g>
<rect x="918.6" y="935" width="80.3" height="3.2" rx="1.6" fill="#111"/>
</g>
</svg>
<div class="a" style="left:378.5px;top:249px;font-size:41px;line-height:44px;color:#262626;white-space:nowrap;letter-spacing:-0.45px">MobiDrive</div>
<div class="a" style="left:820px;top:257px;font-size:21.8px;line-height:26px;color:#2b7de9;font-weight:bold;white-space:nowrap;letter-spacing:-0.75px">www.mobidrive.com</div>
<div class="a" style="left:290.5px;top:437px;font-size:44px;line-height:53.5px;color:#1d2b3a;font-weight:bold;white-space:nowrap;letter-spacing:-1.6px">Store and sync<br>on any device</div>
<div class="a" style="left:292px;top:556.5px;font-size:21px;line-height:28.1px;color:#1f1f1f;white-space:nowrap;letter-spacing:0.1px">Collect all your files in one<br>safe place. Sync and access<br>your content on all platforms.<br>Anywhere, anytime.</div>
<!-- MAIN CHROME -->
<svg width="1918" height="1009" style="left:0;top:0">
<!-- pages icon -->
<path d="M21,236 L20.5,236 Q19,236 19,237.5 L19,256.5 Q19,258 20.5,258 L33.5,258 Q35,258 35,256.5" fill="none" stroke="#a9a9a9" stroke-width="1"/>
<path d="M25,232.1 L31.9,232.1 L39.6,239.5 L39.6,252.2 Q39.6,254.2 37.6,254.2 L25,254.2 Q23,254.2 23,252.2 L23,234.1 Q23,232.1 25,232.1 Z" fill="#fff" stroke="#3d4850" stroke-width="1.3"/>
<path d="M32,232 L40,239.8 L33.3,239.8 Q32,239.8 32,238.5 Z" fill="#3d4850"/>
<!-- sign icon -->
<rect x="28.2" y="311.2" width="14.7" height="10.3" rx="1" fill="#fff" stroke="#3d4850" stroke-width="1.3"/>
<path d="M20,307.9 L30.9,304.1 L34.7,307.9 L34.7,316.6 L18.9,323.2 Z" fill="#7d7f81"/>
<circle cx="27.1" cy="313.9" r="2.6" fill="#fff"/>
<path d="M18.9,323.2 L27.1,313.9" stroke="#fff" stroke-width="0.9"/>
<path d="M34.7,298 L41.8,305.2 L37.4,308.4 L32,302.4 Z" fill="#0a6cbd"/>
<!-- attach icon -->
<g transform="translate(30,376.5) scale(0.72) translate(-1104.6,-134.4)"><path d="M1109.1,127 L1100,136.5 A3.2,3.2 0 0,0 1104.5,141 L1116.5,129.2 A5.3,5.3 0 0,0 1109,121.7 L1093,136.5 A7.2,7.2 0 0,0 1103.2,146.7 L1117.6,134.9" fill="none" stroke="#1a73c5" stroke-width="1.8" stroke-linecap="round"/></g>
<!-- layers icon -->
<path d="M16.8,440.5 L27.5,447 M16.8,445.5 L27.5,452" stroke="#3d4850" stroke-width="1.3" fill="none"/>
<path d="M16.2,437.4 L27.6,430 L40.7,437.4 L28.2,444.5 Z" fill="#0a6cbd"/>
<path d="M27.3,453.5 L29,448.5 L38.5,441.5 Q40.5,440.3 41.8,442 Q42.8,443.5 41.3,444.8 L31.8,451.8 Z" fill="#0a6cbd"/>
<!-- bookmark -->
<rect x="19" y="495.2" width="21.8" height="27.3" rx="2.5" fill="#fff" stroke="#3d4850" stroke-width="1.3"/>
<path d="M23.8,495 L30.9,495 L30.9,508.1 L27.35,504.5 L23.8,508.1 Z" fill="#e31b3f"/>
<!-- collapse triangles -->
<path d="M70,581 L81.1,590.6 L70,600.3 Z" fill="#8c8c8c"/>
<path d="M1324,580.5 L1335.3,591 L1324,601.5 Z" fill="#8c8c8c"/>
<!-- doc scrollbar -->
<path d="M1291,229.9 L1297,223.8 L1303,229.9 Z" fill="#707070"/>
<rect x="1288" y="252" width="18" height="135" fill="#dcdcdc"/>
<path d="M1290.8,956.8 L1303.1,956.8 L1297,963.1 Z" fill="#707070"/>
</svg>
<!-- PROPERTIES -->
<div class="a" style="left:1389px;top:240px;font-size:24.5px;line-height:30px;color:#c42b2b;white-space:nowrap">Properties</div>
<div class="a" style="left:1406.6px;top:390px;font-size:17.5px;line-height:22px;color:#c42b2b;white-space:nowrap">Appearance</div>
<div class="a" style="left:1406.6px;top:436px;font-size:17.5px;line-height:22px;color:#1b1b1b;white-space:nowrap">Colors</div>
<div class="a" style="left:1753px;top:567px;font-size:17px;line-height:22px;color:#1b1b1b;white-space:nowrap">100%</div>
<div class="a" style="left:1406px;top:643px;font-size:17.3px;line-height:22px;color:#1b1b1b;white-space:nowrap">Line Style</div>
<div class="a" style="left:1406px;top:790px;font-size:18px;line-height:22px;color:#c42b2b;white-space:nowrap">Information</div>
<div class="a" style="left:1414.2px;top:843px;font-size:18px;line-height:22px;color:#707070;white-space:nowrap">Author</div>
<div class="a" style="left:1414.2px;top:900px;font-size:17.6px;line-height:22px;color:#707070;white-space:nowrap">Subject</div>
<div class="a" style="left:1414.2px;top:955px;font-size:18px;line-height:22px;color:#707070;white-space:nowrap;height:14.5px;overflow:hidden">Modified</div>
<svg width="1918" height="1009" style="left:0;top:0">
<path d="M1818.6,243 L1832.6,257 M1832.6,243 L1818.6,257" stroke="#3d4850" stroke-width="1.5"/>
<path d="M1386.3,326.5 C1391,324 1399,320 1403.5,316 C1407,313 1406.5,310.5 1404,310.6 C1400,310.8 1394,317 1392.2,322 C1390.8,326 1391.5,331 1393.8,330.8 C1396,330.5 1398.5,325 1401.3,324.5 C1403.5,324.2 1403,326 1401,328 C1399,330.2 1399,332 1400.8,332 C1402,332 1403,331.3 1404,330.6" fill="none" stroke="#1a73c5" stroke-width="1.3"/>
<defs><filter id="bl" x="-50%" y="-50%" width="200%" height="200%"><feGaussianBlur stdDeviation="4"/></filter></defs>
<rect x="1414" y="304" width="112" height="32" fill="#fcfcfc"/>
<ellipse cx="1470" cy="316" rx="9" ry="6" fill="#d8d8d8" filter="url(#bl)"/>
<ellipse cx="1502" cy="316" rx="8" ry="7" fill="#9a9a9a" filter="url(#bl)"/>
<rect x="1382" y="354" width="414" height="1.6" fill="#c6c6c6"/>
<path d="M1383,406.6 L1393.5,396 L1393.5,406.6 Z" fill="#707070"/>
<rect x="1487" y="445" width="309" height="1.3" fill="#c6c6c6"/>
<!-- bucket -->
<path d="M1419.8,492 Q1418.5,484 1423.2,484 Q1427.8,484 1427.5,489.5" fill="none" stroke="#3d4850" stroke-width="1"/>
<path d="M1417.4,496.4 L1425.1,489.3 L1432.9,499 L1426.4,505.4 Z" fill="#fff" stroke="#3d4850" stroke-width="1.1" stroke-linejoin="round"/>
<path d="M1425.1,493.8 Q1419.5,499 1419.3,504 Q1419.6,506 1421.3,504.5 Q1423.5,498 1425.1,493.8 Z" fill="#0a6cbd" stroke="#0a6cbd" stroke-width="1.2"/>
<rect x="1412.6" y="507.3" width="26.8" height="7" fill="#8e2ea6" stroke="#d2d2d2" stroke-width="0.9"/>
<path d="M1448.3,496.8 L1459.9,496.8 L1454.1,502.9 Z" fill="#4a5560"/>
<!-- swatches -->
<rect x="1678" y="475.7" width="47.8" height="48.1" fill="#ebd3d3"/>
<g stroke="#d0d0d0" stroke-width="1.2">
<rect x="1492.1" y="482" width="35.7" height="35.7" fill="#fee934"/>
<rect x="1540.2" y="482" width="35.7" height="35.7" fill="#96c05a"/>
<rect x="1588" y="482" width="35.7" height="35.7" fill="#4ea5ea"/>
<rect x="1635.8" y="482" width="35.7" height="35.7" fill="#e0503e"/>
<rect x="1683.9" y="482" width="35.7" height="35.7" fill="#8e2ea6"/>
<rect x="1731.9" y="482" width="35.7" height="35.7" fill="#000"/>
<rect x="1779.6" y="482" width="35.7" height="35.7" fill="#fff"/>
</g>
<rect x="1796" y="470" width="36" height="60" fill="#f9f9f9"/>
<!-- opacity -->
<defs><linearGradient id="ck" x1="0" y1="0" x2="1" y2="0"><stop offset="0" stop-color="#5aa8d0"/><stop offset="1" stop-color="#ffffff"/></linearGradient></defs>
<rect x="1408.6" y="568.6" width="24" height="21.8" rx="2" fill="url(#ck)" stroke="#3d4850" stroke-width="1.2"/>
<g fill="#6aaed4"><rect x="1410" y="570" width="6.7" height="6.5"/><rect x="1410" y="583" width="6.7" height="6.5"/></g>
<g fill="#8fb3c8"><rect x="1416.7" y="576.5" width="6.7" height="6.5"/></g>
<g fill="#b4bcc2"><rect x="1423.4" y="570" width="7.8" height="6.5"/><rect x="1423.4" y="583" width="7.8" height="6.5"/></g>
<rect x="1454" y="576.9" width="284" height="2.3" fill="#c01818"/>
<rect x="1735.7" y="569" width="6.5" height="17.7" rx="3" fill="#d7aaaa"/>
<rect x="1487" y="652.8" width="309" height="1.3" fill="#c6c6c6"/>
<!-- line width icon -->
<g fill="#2a9fd8"><rect x="1409" y="692.4" width="23.4" height="2.4"/><rect x="1409" y="697" width="23.4" height="2.6"/><rect x="1409" y="701.8" width="23.4" height="3.4"/><rect x="1409" y="706.8" width="23.4" height="3.9"/></g>
<rect x="1455.3" y="685.3" width="129.3" height="33.3" rx="4" fill="#fff" stroke="#3b8fd9" stroke-width="2"/>
<path d="M1567.8,698.5 L1580,698.5 L1573.9,704.6 Z" fill="#4a5560"/>
<!-- dash icon -->
<g fill="#3d4850"><rect x="1619" y="692.4" width="23" height="1"/><rect x="1619" y="696" width="23" height="2.3"/><rect x="1619" y="706" width="23" height="4.7"/>
<rect x="1619" y="700.5" width="3" height="3.5"/><rect x="1625" y="700.5" width="3" height="3.5"/><rect x="1631" y="700.5" width="3" height="3.5"/><rect x="1637" y="700.5" width="3" height="3.5"/></g>
<rect x="1665.3" y="685.3" width="129.7" height="33.3" rx="4" fill="#fff" stroke="#c8c8c8" stroke-width="2"/>
<rect x="1670.4" y="700.3" width="95.2" height="2" fill="#000"/>
<path d="M1777.8,698.5 L1790,698.5 L1783.9,704.6 Z" fill="#4a5560"/>
<path d="M1383.4,805.5 L1393.5,796.6 L1393.5,805.5 Z" fill="#707070"/>
<rect x="1566" y="837" width="250" height="33" rx="4" fill="#fff" stroke="#c8c8c8" stroke-width="2"/>
<rect x="1567" y="838" width="130" height="4" fill="#f4f4f4"/>
<ellipse cx="1597" cy="854" rx="14" ry="6" fill="#8a8a8a" filter="url(#bl)"/>
<ellipse cx="1648" cy="854" rx="10" ry="6" fill="#9a9a9a" filter="url(#bl)"/>
<rect x="1566" y="893" width="250" height="33" rx="4" fill="#fff" stroke="#c8c8c8" stroke-width="2"/>
<rect x="1796" y="830" width="36" height="110" fill="#f9f9f9"/>
<!-- props scrollbar -->
<rect x="1832.4" y="306" width="26.6" height="663" fill="#eeeeee"/>
<path d="M1840.5,322 L1846.7,316 L1853,322 Z" fill="#707070"/>
<rect x="1837.7" y="332.5" width="18.5" height="546" fill="#dcdcdc"/>
<path d="M1840.6,958 L1853.6,958 L1847.1,964 Z" fill="#707070"/>
<!-- right strip -->
<rect x="1860" y="276.5" width="58" height="1.6" fill="#e1e1e1"/>
<rect x="1860" y="342.6" width="58" height="1.6" fill="#e1e1e1"/>
<rect x="1913" y="278" width="5" height="65" fill="#2a2a2a"/>
<path d="M1879,230.8 L1900,230.8 Q1902,230.8 1902,232.8 L1902,244.5 Q1902,246.5 1900,246.5 L1895.8,246.5 L1895.8,257 L1888.5,246.5 L1879,246.5 Q1877,246.5 1877,244.5 L1877,232.8 Q1877,230.8 1879,230.8 Z" fill="#fde3c8" stroke="#f59a23" stroke-width="1.3" stroke-linejoin="round"/>
<path d="M1878,302.1 L1901,302.1 M1878,311.1 L1901,311.1 M1878,320.1 L1901,320.1" stroke="#3d4850" stroke-width="1"/>
<g fill="#0a6cbd"><circle cx="1881" cy="302.1" r="2.9"/><circle cx="1892.8" cy="311.1" r="2.9"/><circle cx="1886" cy="320.1" r="2.9"/></g>
</svg>
<div class="a" style="left:1478.6px;top:690px;font-size:18px;line-height:22px;color:#1b1b1b">3</div>
<!-- STATUS -->
<div class="a" style="left:0;top:969.5px;width:1918px;height:2px;background:#dcdcdc"></div>
<div class="a" style="left:0;top:971.5px;width:1918px;height:37.5px;background:#f4f4f4"></div>

<svg width="1918" height="1009" style="left:0;top:0">
<rect x="776.8" y="980.7" width="1.3" height="17.3" fill="#b4bcc2"/>
<path d="M790.4,980.7 L779.6,989.4 L790.4,998 Z" fill="#b4bcc2"/>
<path d="M825.1,980.7 L814.8,989.4 L825.1,998 Z" fill="#b4bcc2"/>
<path d="M980.5,980.7 L991.3,989.4 L980.5,998 Z" fill="#3d4b57"/>
<path d="M1014.6,980.7 L1025.4,989.4 L1014.6,998 Z" fill="#3d4b57"/>
<rect x="1026.6" y="980.7" width="1.3" height="17.3" fill="#3d4b57"/>
<path d="M1085.5,981.8 L1096.5,981.8 L1101.5,986.8 L1101.5,998.6 L1085.5,998.6 Z" fill="none" stroke="#c3c8cc" stroke-width="1.1"/>
<path d="M1097,981.8 L1101.5,986.8 L1097,986.8 Z" fill="#c3c8cc"/>
<path d="M1097.5,993 L1089,993 M1092,990 L1089,993 L1092,996" fill="none" stroke="#c3c8cc" stroke-width="1.1"/>
<path d="M1127.3,981.8 L1138.3,981.8 L1143.3,986.8 L1143.3,998.6 L1127.3,998.6 Z" fill="none" stroke="#c3c8cc" stroke-width="1.1"/>
<path d="M1138.8,981.8 L1143.3,986.8 L1138.8,986.8 Z" fill="#c3c8cc"/>
<path d="M1131,993 L1139.5,993 M1136.5,990 L1139.5,993 L1136.5,996" fill="none" stroke="#c3c8cc" stroke-width="1.1"/>
<!-- view icons -->
<path d="M1605.3,981.5 Q1610.5,980.5 1616.6,983 Q1622.7,980.5 1628,981.5 L1628,998.5 Q1622.7,997.5 1616.6,999.3 Q1610.5,997.5 1605.3,998.5 Z M1616.6,983 L1616.6,999.3" fill="none" stroke="#3d4850" stroke-width="1.1"/>
<path d="M1619.5,986 L1625,986 M1619.5,989.5 L1625,989.5 M1619.5,993 L1625,993" stroke="#3d4850" stroke-width="1"/>
<path d="M1643.8,980.8 L1655,980.8 L1660.8,986.6 L1660.8,999 L1643.8,999 Z" fill="none" stroke="#3d4850" stroke-width="1.1"/>
<path d="M1655,980.8 L1655,986.6 L1660.8,986.6" fill="none" stroke="#3d4850" stroke-width="1"/>
<path d="M1647,989 L1657.5,989 M1647,992.3 L1657.5,992.3 M1647,995.6 L1657.5,995.6" stroke="#3d4850" stroke-width="1"/>
<rect x="1679.8" y="980.8" width="17.2" height="18.2" fill="none" stroke="#3d4850" stroke-width="1.1"/>
<path d="M1683,985 L1694,985 M1683,988.3 L1694,988.3 M1683,991.6 L1694,991.6 M1683,994.9 L1694,994.9" stroke="#3d4850" stroke-width="1"/>
<path d="M1738.5,990 L1753.5,990" stroke="#3d4850" stroke-width="1.6"/>
<path d="M1871,989.7 L1886,989.7 M1878.5,982.2 L1878.5,997.2" stroke="#3d4850" stroke-width="1.6"/>
</svg>
<div class="a" style="left:873px;top:979px;font-size:17.3px;line-height:22px;color:#555;white-space:nowrap">1 (1 / 3)</div>
<div class="a" style="left:1794.8px;top:978px;font-size:17.3px;line-height:22px;color:#707070;white-space:nowrap">21%</div>
<div class="a" style="left:0;top:1007px;width:1918px;height:2px;background:#c4c4c4"></div>
<!-- ANNOT -->
<svg width="1918" height="1009" style="left:0;top:0">
<path d="M384.9,333.4 Q420,300 462.4,258.4 L450.5,251.7 L503,245.4 L481.2,295.4 L479.1,280.8 Q430,308 384.9,333.4 Z" fill="#fff" stroke="#fff" stroke-width="8" stroke-linejoin="round"/>
<path d="M384.9,333.4 Q420,300 462.4,258.4 L450.5,251.7 L503,245.4 L481.2,295.4 L479.1,280.8 Q430,308 384.9,333.4 Z" fill="#e94b4b"/>
<path d="M280.4,391.2 Q350,380 427.7,372.3 L420,358.8 L468.2,384.3 L421.6,413.1 L428.8,399.1 Q350,395 280.4,391.2 Z" fill="#e94b4b"/>
<rect x="512.2" y="324.8" width="437.4" height="129.3" fill="none" stroke="#fff" stroke-width="4"/>
<rect x="521" y="333.5" width="420" height="112.2" fill="none" stroke="#e94b4b" stroke-width="9.5"/>
<path d="M569.5,404.7 C572,401 574,399.5 576.4,398.3 C583,394.5 590,392 596.5,389.6 C606,385 617,382.5 627.5,379.7 C635,377.5 641,376 647.6,375 C656,373.5 663,372.3 671.3,371.9 L693.2,371.9 C704,372.5 714,375.5 724.2,379.2 C733,382.5 739,387 746.1,391 C754,396 762,399.5 771.7,401.6 L859.3,401.6 C872,401 883,398 894,395 C896,394 898,393.6 900.3,393.4" fill="none" stroke="#8e2cc4" stroke-width="2" stroke-linecap="round"/>
</svg>
<div class="a" style="left:491px;top:96px;width:106px;height:130px;border:4px solid #fff"></div>
<div class="a" style="left:495.3px;top:100.2px;width:97.1px;height:121.6px;border:9px solid #e94c4c"></div>
<div class="a" style="left:504.3px;top:109.2px;width:79.1px;height:103.6px;border:4.5px solid #fff"></div>
</body></html>
